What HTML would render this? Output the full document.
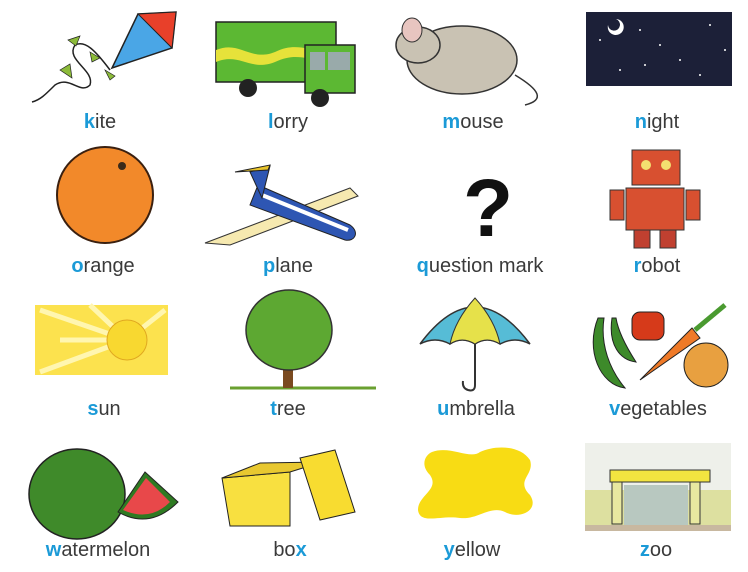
<!DOCTYPE html>
<html><head><meta charset="utf-8"><style>
body{margin:0;width:748px;height:572px;background:#fff;overflow:hidden;position:relative;font-family:"Liberation Sans","DejaVu Sans",sans-serif}
.l{position:absolute;font-size:20px;color:#3a3a3a;transform:translateX(-50%);white-space:nowrap;line-height:20px}
.l b{color:#1b9ad7;font-weight:bold}
svg{position:absolute;left:0;top:0}
</style></head><body>
<svg width="748" height="572" viewBox="0 0 748 572">
<!-- kite -->
<polygon points="138,14 176,12 172,48 112,68" fill="#4aa6e6" stroke="#222" stroke-width="1.5"/>
<polygon points="138,14 176,12 172,48" fill="#e8402a" stroke="#222" stroke-width="1"/>
<path d="M110,70 C95,50 85,40 75,45 C65,60 95,70 90,85 C80,95 70,75 55,85 C45,95 40,100 32,102" fill="none" stroke="#222" stroke-width="1.5"/>
<g fill="#8cbb3a" stroke="#222" stroke-width=".7"><polygon points="60,70 70,64 72,78"/><polygon points="90,52 100,58 92,62"/><polygon points="105,70 115,76 110,80"/><polygon points="68,40 80,36 76,46"/></g>
<!-- lorry -->
<rect x="216" y="22" width="120" height="60" fill="#5cb833" stroke="#222" stroke-width="1.5"/>
<path d="M216,50 C240,40 250,62 275,52 C300,40 310,55 336,48 L336,58 C310,64 300,50 275,62 C250,72 240,52 216,62Z" fill="#e6e23a"/>
<rect x="305" y="45" width="50" height="48" fill="#5cb833" stroke="#222" stroke-width="1.5"/>
<rect x="310" y="52" width="15" height="18" fill="#9aa" /><rect x="328" y="52" width="22" height="18" fill="#9aa"/>
<circle cx="248" cy="88" r="9" fill="#222"/><circle cx="320" cy="98" r="9" fill="#222"/>
<!-- mouse -->
<ellipse cx="462" cy="60" rx="55" ry="34" fill="#c9c2b3" stroke="#333" stroke-width="1.5"/>
<ellipse cx="418" cy="45" rx="22" ry="18" fill="#c9c2b3" stroke="#333" stroke-width="1.5"/>
<ellipse cx="412" cy="30" rx="10" ry="12" fill="#e8c5c0" stroke="#333"/>
<path d="M515,75 C540,90 545,100 525,105" fill="none" stroke="#333" stroke-width="1.5"/>
<!-- night -->
<rect x="586" y="12" width="146" height="74" fill="#1c2038"/>
<g fill="#fff"><circle cx="600" cy="40" r="1"/><circle cx="640" cy="30" r="1"/><circle cx="680" cy="60" r="1"/><circle cx="710" cy="25" r="1"/><circle cx="620" cy="70" r="1"/><circle cx="660" cy="45" r="1"/><circle cx="700" cy="75" r="1"/><circle cx="725" cy="50" r="1"/><circle cx="645" cy="65" r="1"/></g>
<path d="M608,25 a8,8 0 1,0 8,-6 a6,6 0 1,1 -8,6" fill="#fff"/>
<!-- orange -->
<circle cx="105" cy="195" r="48" fill="#f2892a" stroke="#3a2010" stroke-width="2"/>
<circle cx="122" cy="166" r="4" fill="#3a2a1a"/>
<!-- plane -->
<polygon points="205,243 350,188 358,196 230,245" fill="#f6e9b0" stroke="#333"/>
<path d="M258,185 L350,225 C360,232 355,242 345,240 L250,205Z" fill="#2e56b3" stroke="#222"/>
<path d="M262,195 L348,230" stroke="#fff" stroke-width="4"/>
<polygon points="250,172 270,166 262,198" fill="#2e56b3" stroke="#222"/>
<polygon points="235,172 270,165 268,170" fill="#e8c42a" stroke="#222"/>
<!-- question -->
<text x="463" y="236" font-size="82" font-weight="bold" fill="#111" font-family="Liberation Sans">?</text>
<!-- robot -->
<rect x="632" y="150" width="48" height="35" fill="#d85030" stroke="#333"/>
<rect x="626" y="188" width="58" height="42" fill="#d85030" stroke="#333"/>
<rect x="610" y="190" width="14" height="30" fill="#d85030" stroke="#333"/><rect x="686" y="190" width="14" height="30" fill="#d85030" stroke="#333"/>
<rect x="634" y="230" width="16" height="18" fill="#c04030" stroke="#333"/><rect x="660" y="230" width="16" height="18" fill="#c04030" stroke="#333"/>
<circle cx="646" cy="165" r="5" fill="#f3e070"/><circle cx="666" cy="165" r="5" fill="#f3e070"/>
<!-- sun -->
<rect x="35" y="305" width="133" height="70" fill="#fce24e"/>
<g stroke="#fff6b0" stroke-width="5"><path d="M127,340 L40,310 M127,340 L40,372 M127,340 L90,305 M127,340 L165,310 M127,340 L60,340"/></g>
<circle cx="127" cy="340" r="20" fill="#f8d830" stroke="#e0a820"/>
<!-- tree -->
<line x1="230" y1="388" x2="376" y2="388" stroke="#6aa030" stroke-width="3"/>
<rect x="283" y="350" width="10" height="38" fill="#7a4a20"/>
<ellipse cx="289" cy="330" rx="43" ry="40" fill="#5da832" stroke="#333" stroke-width="1.5"/>
<!-- umbrella -->
<path d="M420,344 Q475,270 530,344 Q515,336 500,344 Q487,336 475,344 Q462,336 450,344 Q435,336 420,344Z" fill="#56bcd6" stroke="#333" stroke-width="1.5"/>
<path d="M475,298 Q455,320 450,344 Q462,336 475,344 Q487,336 500,344 Q495,320 475,298Z" fill="#e6e14a" stroke="#333"/>
<path d="M475,344 L475,385 Q475,392 468,390 Q462,388 463,381" fill="none" stroke="#333" stroke-width="2"/>
<!-- vegetables -->
<path d="M598,318 C585,350 600,385 625,388 C610,370 600,345 604,318Z" fill="#3d8a2a" stroke="#222"/>
<path d="M612,318 C608,345 620,360 636,362 C625,345 618,330 616,318Z" fill="#3d8a2a" stroke="#222"/>
<rect x="632" y="312" width="32" height="28" rx="8" fill="#d63a1a" stroke="#222"/>
<polygon points="640,380 692,328 700,338" fill="#ef7a28" stroke="#222"/>
<path d="M695,330 L725,305" stroke="#4a9a30" stroke-width="5"/>
<ellipse cx="706" cy="365" rx="22" ry="22" fill="#e8a040" stroke="#222"/>
<!-- watermelon -->
<ellipse cx="77" cy="494" rx="48" ry="45" fill="#3f8a2a" stroke="#222" stroke-width="1.5"/>
<path d="M118,512 Q150,530 178,502 L145,472Z" fill="#2e7a22" stroke="#222"/>
<path d="M123,510 Q150,522 170,502 L146,478Z" fill="#e8484a"/>
<!-- box -->
<polygon points="222,478 290,472 290,526 230,526" fill="#f8e040" stroke="#222"/>
<polygon points="222,478 260,463 322,462 290,472" fill="#e8c830" stroke="#222"/>
<polygon points="300,458 335,450 355,512 320,520" fill="#f8dc30" stroke="#222"/>
<!-- yellow splat -->
<path d="M432,452 C450,445 470,460 480,452 C495,445 520,445 530,460 C535,475 515,480 530,495 C540,510 520,520 505,512 C490,505 478,520 460,518 C440,515 420,525 418,510 C418,495 440,490 430,475 C420,465 425,455 432,452Z" fill="#f8dc14"/>
<!-- zoo -->
<rect x="585" y="443" width="146" height="88" fill="#eef0ea"/>
<rect x="585" y="490" width="146" height="35" fill="#dde0a0"/>
<rect x="610" y="470" width="100" height="12" fill="#f2e440" stroke="#333"/>
<rect x="612" y="482" width="10" height="42" fill="#e8e8a0" stroke="#333"/><rect x="690" y="482" width="10" height="42" fill="#e8e8a0" stroke="#333"/>
<rect x="624" y="485" width="64" height="40" fill="#b8c8c0"/>
<rect x="585" y="525" width="146" height="6" fill="#c8b8a0"/>
</svg>
<div class="l" style="left:100px;top:112px"><b>k</b>ite</div>
<div class="l" style="left:288px;top:112px"><b>l</b>orry</div>
<div class="l" style="left:473px;top:112px"><b>m</b>ouse</div>
<div class="l" style="left:657px;top:112px"><b>n</b>ight</div>
<div class="l" style="left:103px;top:256px"><b>o</b>range</div>
<div class="l" style="left:288px;top:256px"><b>p</b>lane</div>
<div class="l" style="left:480px;top:256px"><b>q</b>uestion mark</div>
<div class="l" style="left:657px;top:256px"><b>r</b>obot</div>
<div class="l" style="left:104px;top:399px"><b>s</b>un</div>
<div class="l" style="left:288px;top:399px"><b>t</b>ree</div>
<div class="l" style="left:476px;top:399px"><b>u</b>mbrella</div>
<div class="l" style="left:658px;top:399px"><b>v</b>egetables</div>
<div class="l" style="left:98px;top:540px"><b>w</b>atermelon</div>
<div class="l" style="left:290px;top:540px">bo<b>x</b></div>
<div class="l" style="left:472px;top:540px"><b>y</b>ellow</div>
<div class="l" style="left:656px;top:540px"><b>z</b>oo</div>
</body></html>
